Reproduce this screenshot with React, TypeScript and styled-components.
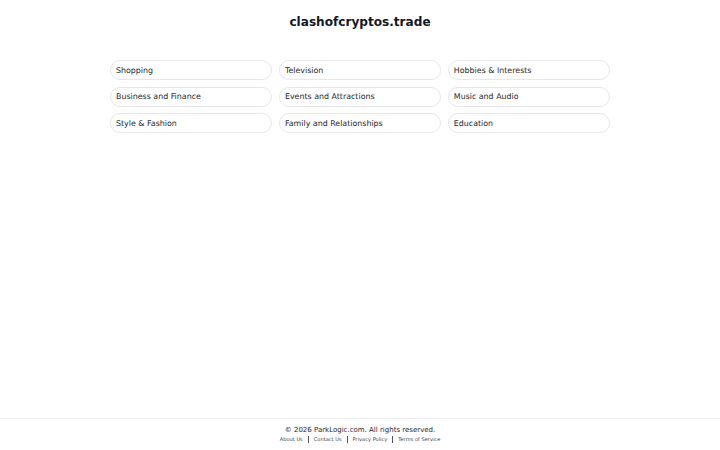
import React from 'react'
import styled, { createGlobalStyle } from 'styled-components'

const GlobalStyle = createGlobalStyle`
  *, *::before, *::after {
    box-sizing: border-box;
  }

  html, body {
    margin: 0;
    padding: 0;
    background: #ffffff;
    font-family: 'DejaVu Sans', 'Liberation Sans', sans-serif;
    color: #111827;
  }
`

const Page = styled.div`
  min-height: 100vh;
  display: flex;
  flex-direction: column;
`

const Main = styled.main`
  flex: 1;
  display: flex;
  flex-direction: column;
  align-items: center;
  padding-top: 14px;
`

const Title = styled.h1`
  margin: 0;
  font-size: 12.1px;
  line-height: 16px;
  font-weight: 700;
  color: #111827;
`

const CategoryGrid = styled.ul`
  list-style: none;
  margin: 30px 0 0;
  padding: 0;
  width: 500px;
  display: grid;
  grid-template-columns: repeat(3, 1fr);
  gap: 6.5px 6.75px;
`

const CategoryLink = styled.a`
  display: flex;
  align-items: center;
  height: 20px;
  padding: 0 5px;
  border: 1px solid #e5e7eb;
  border-radius: 999px;
  font-size: 7.9px;
  color: #27272a;
  text-decoration: none;
  cursor: pointer;

  &:hover {
    background-color: #f9fafb;
  }
`

const Footer = styled.footer`
  border-top: 1px solid #eceef1;
  padding: 7px 0;
  display: flex;
  flex-direction: column;
  align-items: center;
`

const Copyright = styled.p`
  margin: 0;
  font-size: 7px;
  line-height: 9px;
  color: #27272a;
`

const FooterLinks = styled.nav`
  display: flex;
  align-items: center;
  font-size: 5.1px;
  line-height: 8px;
  color: #3f3f46;
`

const FooterLink = styled.a`
  color: inherit;
  text-decoration: none;
`

const Divider = styled.span`
  width: 1px;
  height: 7px;
  background: #52525b;
  margin: 0 5px;
`

const categories = [
  'Shopping',
  'Television',
  'Hobbies & Interests',
  'Business and Finance',
  'Events and Attractions',
  'Music and Audio',
  'Style & Fashion',
  'Family and Relationships',
  'Education',
]

const footerLinks = ['About Us', 'Contact Us', 'Privacy Policy', 'Terms of Service']

export default function App() {
  return (
    <Page>
      <GlobalStyle />
      <Main>
        <Title>clashofcryptos.trade</Title>
        <CategoryGrid>
          {categories.map((name) => (
            <li key={name}>
              <CategoryLink href="#">{name}</CategoryLink>
            </li>
          ))}
        </CategoryGrid>
      </Main>
      <Footer>
        <Copyright>© 2026 ParkLogic.com. All rights reserved.</Copyright>
        <FooterLinks>
          {footerLinks.map((label, i) => (
            <React.Fragment key={label}>
              {i > 0 && <Divider />}
              <FooterLink href="#">{label}</FooterLink>
            </React.Fragment>
          ))}
        </FooterLinks>
      </Footer>
    </Page>
  )
}
